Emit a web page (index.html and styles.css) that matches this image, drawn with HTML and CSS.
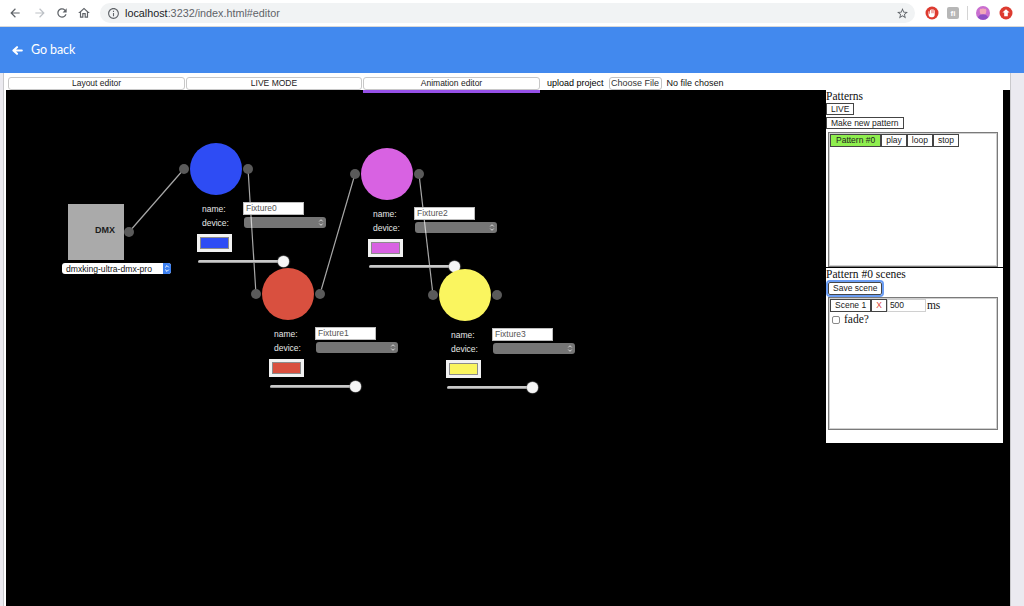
FILE: index.html
```html
<!DOCTYPE html>
<html>
<head>
<meta charset="utf-8">
<title>Animation editor</title>
<link rel="stylesheet" href="styles.css">
</head>
<body>
<div class="chrome">
  <span class="nav-btn nav-back"><svg viewBox="0 0 24 24"><path fill="#5f6368" d="M20 11H7.83l5.59-5.59L12 4l-8 8 8 8 1.41-1.41L7.83 13H20v-2z"/></svg></span>
  <span class="nav-btn nav-fwd"><svg viewBox="0 0 24 24"><path fill="#bdc1c6" d="M4 11h12.17l-5.59-5.59L12 4l8 8-8 8-1.41-1.41L16.17 13H4v-2z"/></svg></span>
  <span class="nav-btn"><svg viewBox="0 0 24 24"><path fill="#5f6368" d="M17.65 6.35A7.958 7.958 0 0 0 12 4c-4.42 0-7.99 3.58-7.99 8s3.57 8 7.99 8c3.73 0 6.84-2.550 7.730-6h-2.08A5.99 5.99 0 0 1 12 18c-3.31 0-6-2.69-6-6s2.69-6 6-6c1.66 0 3.14.69 4.220 1.78L13 11h7V4l-2.35 2.35z"/></svg></span>
  <span class="nav-btn"><svg viewBox="0 0 24 24"><path fill="#5f6368" d="M12 5.69l5 4.5V18h-2v-6H9v6H7v-7.81l5-4.5M12 3L2 12h3v8h6v-6h2v6h6v-8h3L12 3z"/></svg></span>
  <div class="omnibox">
    <svg class="info" viewBox="0 0 24 24"><path fill="#5f6368" d="M11 7h2v2h-2zm0 4h2v6h-2zm1-9C6.48 2 2 6.48 2 12s4.48 10 10 10 10-4.48 10-10S17.52 2 12 2zm0 18c-4.41 0-8-3.59-8-8s3.59-8 8-8 8 3.59 8 8-3.59 8-8 8z"/></svg>
    <span class="url"><b>localhost</b>:3232/index.html#editor</span>
    <svg class="star" viewBox="0 0 24 24"><path fill="#5f6368" d="M22 9.24l-7.19-.62L12 2 9.19 8.63 2 9.24l5.46 4.73L5.820 21 12 17.27 18.18 21l-1.63-7.03L22 9.24zM12 15.4l-3.76 2.27 1-4.28-3.32-2.88 4.38-.38L12 6.1l1.71 4.04 4.38.38-3.32 2.88 1 4.28L12 15.4z"/></svg>
  </div>
  <span class="ext ext-red"><svg viewBox="0 0 14 14"><circle cx="7" cy="7" r="6.5" fill="#dd3b30"/><path fill="#fff" d="M5 4.2v3.6h-.6V5.6c0-.5-.9-.5-.9 0v3c0 1.6 1.1 2.6 2.6 2.6h1.3c1.4 0 2.3-1 2.3-2.4V4.6c0-.5-.8-.5-.8 0v2.6h-.4V3.7c0-.5-.8-.5-.8 0v3.5h-.4V3.4c0-.5-.8-.5-.8 0v3.8h-.4V4.2c0-.5-.8-.5-.8 0z"/></svg></span>
  <span class="ext ext-gray">fi</span>
  <span class="ext-sep"></span>
  <span class="ext ext-avatar"><svg viewBox="0 0 14 14"><circle cx="7" cy="7" r="7" fill="#c96fd0"/><circle cx="7" cy="5.6" r="3.2" fill="#f2a7b9"/><path d="M1.8 11.5c1.2-2.4 3-3.2 5.2-3.2s4 .8 5.2 3.2A7 7 0 0 1 1.8 11.5z" fill="#8e4fc4"/><path d="M3.2 4.6l1.6-2 .6 1.8zM10.8 4.6l-1.6-2-.6 1.8z" fill="#f2a7b9"/></svg></span>
  <span class="ext ext-red2"><svg viewBox="0 0 14 14"><circle cx="7" cy="7" r="6.5" fill="#dd3b30"/><path fill="#fff" d="M7 3.2l3.6 3.4H8.8v3.6H5.2V6.6H3.4z"/></svg></span>
</div>

<header class="appbar">
  <svg class="back-arrow" viewBox="0 0 11 9"><path d="M5 1.2L1.4 4.5 5 7.8M1.6 4.5H9.8" fill="none" stroke="#fff" stroke-width="2.1" stroke-linecap="round" stroke-linejoin="round"/></svg>
  <span class="back-text">Go back</span>
</header>

<main class="main">
  <div class="tabs">
    <button class="tab tab-wide">Layout editor</button>
    <button class="tab">LIVE MODE</button>
    <button class="tab tab-wide active">Animation editor</button>
    <span class="upload-label">upload project</span>
    <span class="file-btn">Choose File</span>
    <span class="file-name">No file chosen</span>
  </div>

  <div class="workspace">
    <div class="canvas">
      <svg class="wires" viewBox="0 0 820 516" width="820" height="516">
        <line x1="123" y1="142" x2="178" y2="79"/>
        <line x1="242" y1="79" x2="250" y2="204"/>
        <line x1="314" y1="204" x2="349" y2="84"/>
        <line x1="413" y1="84" x2="427" y2="205"/>
      </svg>

      <div class="dmx" style="left:56px;top:114px">
        <div class="dmx-row">
          <div class="dmx-box">DMX</div>
          <span class="port"></span>
        </div>
        <div class="dmx-select">
          <span>dmxking-ultra-dmx-pro</span>
          <span class="dmx-arrows"><svg viewBox="0 0 6 9"><path d="M1.2 3.4L3 1.6l1.8 1.8M1.2 5.6L3 7.4l1.8-1.8" fill="none" stroke="#fff" stroke-width="1"/></svg></span>
        </div>
      </div>

      <div class="fixture" style="left:173px;top:53px">
        <div class="fx-head"><span class="port"></span><span class="bulb" style="background:#2e4cf4"></span><span class="port"></span></div>
        <div class="fx-form">
          <span class="fx-label">name:</span><span class="fx-input">Fixture0</span>
          <span class="fx-label">device:</span><span class="fx-select"><svg viewBox="0 0 6 9"><path d="M1.3 3.4L3 1.7l1.7 1.7M1.3 5.6L3 7.3l1.7-1.7" fill="none" stroke="#e4e4e4" stroke-width="0.9"/></svg></span>
        </div>
        <div class="swatch"><span class="swatch-fill" style="background:#2e4cf4"></span></div>
        <input class="dimmer" type="range" min="0" max="100" value="100">
      </div>

      <div class="fixture" style="left:245px;top:178px">
        <div class="fx-head"><span class="port"></span><span class="bulb" style="background:#d9503f"></span><span class="port"></span></div>
        <div class="fx-form">
          <span class="fx-label">name:</span><span class="fx-input">Fixture1</span>
          <span class="fx-label">device:</span><span class="fx-select"><svg viewBox="0 0 6 9"><path d="M1.3 3.4L3 1.7l1.7 1.7M1.3 5.6L3 7.3l1.7-1.7" fill="none" stroke="#e4e4e4" stroke-width="0.9"/></svg></span>
        </div>
        <div class="swatch"><span class="swatch-fill" style="background:#d9503f"></span></div>
        <input class="dimmer" type="range" min="0" max="100" value="100">
      </div>

      <div class="fixture" style="left:344px;top:58px">
        <div class="fx-head"><span class="port"></span><span class="bulb" style="background:#d862e2"></span><span class="port"></span></div>
        <div class="fx-form">
          <span class="fx-label">name:</span><span class="fx-input">Fixture2</span>
          <span class="fx-label">device:</span><span class="fx-select"><svg viewBox="0 0 6 9"><path d="M1.3 3.4L3 1.7l1.7 1.7M1.3 5.6L3 7.3l1.7-1.7" fill="none" stroke="#e4e4e4" stroke-width="0.9"/></svg></span>
        </div>
        <div class="swatch"><span class="swatch-fill" style="background:#d862e2"></span></div>
        <input class="dimmer" type="range" min="0" max="100" value="100">
      </div>

      <div class="fixture" style="left:422px;top:179px">
        <div class="fx-head"><span class="port"></span><span class="bulb" style="background:#faf55f"></span><span class="port"></span></div>
        <div class="fx-form">
          <span class="fx-label">name:</span><span class="fx-input">Fixture3</span>
          <span class="fx-label">device:</span><span class="fx-select"><svg viewBox="0 0 6 9"><path d="M1.3 3.4L3 1.7l1.7 1.7M1.3 5.6L3 7.3l1.7-1.7" fill="none" stroke="#e4e4e4" stroke-width="0.9"/></svg></span>
        </div>
        <div class="swatch"><span class="swatch-fill" style="background:#faf55f"></span></div>
        <input class="dimmer" type="range" min="0" max="100" value="100">
      </div>
    </div>

    <aside class="sidebar">
      <section class="panel panel-patterns">
        <div class="panel-title">Patterns</div>
        <button class="btn">LIVE</button>
        <button class="btn btn-new">Make new pattern</button>
        <div class="list-box">
          <div class="pattern-row">
            <button class="btn btn-pattern">Pattern #0</button>
            <button class="btn">play</button>
            <button class="btn">loop</button>
            <button class="btn">stop</button>
          </div>
        </div>
      </section>
      <section class="panel panel-scenes">
        <div class="panel-title">Pattern #0 scenes</div>
        <button class="btn btn-save">Save scene</button>
        <div class="list-box scene-box">
          <div class="scene-row">
            <button class="btn">Scene 1</button>
            <button class="btn btn-x">X</button>
            <span class="ms-input">500</span>
            <span class="serif-text">ms</span>
          </div>
          <label class="fade-row"><span class="checkbox"></span><span class="serif-text">fade?</span></label>
        </div>
      </section>
    </aside>
  </div>
</main>
</body>
</html>
```
FILE: styles.css
```css
* { box-sizing: border-box; margin: 0; padding: 0; }
html, body { width: 1024px; height: 606px; overflow: hidden; }
body { background: #ebeaf0; font-family: "Liberation Sans", Arial, sans-serif; color: #222; }
button { font-family: inherit; cursor: default; }

/* browser chrome */
.chrome { height: 27px; background: #fff; border-bottom: 1px solid #d8d8d8; display: flex; align-items: center; }
.nav-btn { width: 22px; height: 22px; display: flex; align-items: center; justify-content: center; }
.nav-btn svg { width: 14px; height: 14px; }
.nav-back { margin-left: 4px; }
.nav-fwd { margin-left: 3px; }
.omnibox { margin-left: 5px; width: 815px; height: 20px; border-radius: 10px; background: #f1f3f4; display: flex; align-items: center; padding: 0 6px 0 7px; }
.omnibox .info { width: 13px; height: 13px; }
.url { margin-left: 5px; font-size: 10.8px; color: #5f6368; white-space: nowrap; }
.url b { font-weight: normal; color: #202124; }
.star { margin-left: auto; width: 13px; height: 13px; }
.ext { width: 14px; height: 14px; display: flex; align-items: center; justify-content: center; }
.ext svg { width: 14px; height: 14px; display: block; }
.ext-red { margin-left: 10px; }
.ext-gray { margin-left: 8px; width: 12px; height: 12px; border-radius: 2px; background: #b7b7b7; color: #fff; font-size: 8px; font-weight: bold; }
.ext-sep { margin-left: 8px; width: 1px; height: 14px; background: #d4d4d4; }
.ext-avatar { margin-left: 8px; }
.ext-red2 { margin-left: 9px; }

/* app bar */
.appbar { height: 46px; background: #4289ee; display: flex; align-items: center; padding-left: 12px; }
.back-arrow { width: 11px; height: 9px; }
.back-text { margin-left: 8px; color: #fff; font-family: Lato, "Open Sans", sans-serif; font-size: 12.5px; letter-spacing: -0.1px; line-height: 1; }

/* main */
.main { margin-left: 3px; width: 1008px; height: 533px; background: #fff; border-left: 1px solid #c9c9cc; border-right: 1px solid #c9c9cc; }
.tabs { position: relative; z-index: 2; height: 17px; display: flex; align-items: flex-start; padding: 4px 0 0 4px; gap: 1px; }
.tab { width: 176px; height: 13px; background: #fff; border: 1px solid #c8c8c8; border-radius: 3px; font-size: 8.5px; color: #222; line-height: 11px; text-align: center; position: relative; }
.tab-wide { width: 177px; }
.tab.active::after { content: ""; position: absolute; left: -1px; right: -1px; bottom: -4px; height: 3px; background: #9650e8; }
.upload-label { margin-left: 6px; font-size: 9px; color: #000; line-height: 13px; }
.file-btn { margin-left: 4px; height: 13px; width: 53px; border: 1px solid #c3c3c3; border-radius: 3px; font-size: 9px; line-height: 11px; text-align: center; color: #333; }
.file-name { margin-left: 4px; font-size: 9px; line-height: 13px; color: #111; }

.workspace { margin-left: 2px; height: 516px; background: #000; display: flex; padding-right: 7px; }
.canvas { flex: 1; position: relative; overflow: hidden; }
.wires { position: absolute; left: 0; top: 0; }
.wires line { stroke: #a8a8a8; stroke-width: 1.2; }

.port { width: 10px; height: 10px; border-radius: 50%; background: #5a5a5a; flex: none; }

/* DMX node */
.dmx { position: absolute; }
.dmx-row { display: flex; align-items: center; margin-left: 6px; }
.dmx-box { width: 56px; height: 56px; background: #aaa; display: flex; align-items: center; justify-content: flex-end; padding: 0 9px 5px 0; font-size: 9px; font-weight: bold; color: #1c1c1c; }
.dmx-select { margin-top: 3px; width: 109px; height: 11px; background: #fff; border-radius: 3px; display: flex; align-items: center; padding-left: 4px; font-size: 8.6px; color: #111; }
.dmx-arrows { margin-left: auto; width: 8px; height: 11px; background: #3b7ff0; border-radius: 0 3px 3px 0; display: flex; align-items: center; justify-content: center; }
.dmx-arrows svg { width: 6px; height: 9px; }

/* fixture node */
.fixture { position: absolute; width: 150px; }
.fx-head { display: flex; align-items: center; height: 52px; }
.bulb { width: 52px; height: 52px; border-radius: 50%; margin: 0 1px; flex: none; }
.fx-form { margin: 7px 0 0 23px; display: grid; grid-template-columns: 41px auto; row-gap: 2px; justify-items: start; align-items: center; }
.fx-label { font-size: 8.5px; color: #e8e8e8; }
.fx-input { width: 61px; height: 13px; background: #fff; border: 1px solid #bdbdbd; font-size: 8.5px; line-height: 11px; color: #555; padding-left: 2px; }
.fx-select { width: 82px; height: 11px; margin-left: 1px; border-radius: 3px; background: rgba(255, 255, 255, 0.46); display: flex; align-items: center; justify-content: flex-end; padding-right: 2px; }
.fx-select svg { width: 6px; height: 9px; }
.swatch { margin: 6px 0 0 18px; width: 35px; height: 18px; background: #f2f2f2; padding: 3px; }
.swatch-fill { display: block; width: 100%; height: 100%; border: 1px solid #8c8c8c; }
.dimmer { display: block; margin: 4px 0 0 19px; width: 91px; height: 11px; -webkit-appearance: none; appearance: none; background: transparent; }
.dimmer::-webkit-slider-runnable-track { height: 3px; background: #c9c9c9; border-radius: 2px; border-bottom: 1px solid #999; }
.dimmer::-webkit-slider-thumb { -webkit-appearance: none; width: 11px; height: 11px; border-radius: 50%; background: #f6f6f6; margin-top: -4px; box-shadow: 0 0 1px 0.5px #9a9a9a; }

/* sidebar */
.sidebar { width: 177px; flex: none; align-self: flex-start; display: flex; flex-direction: column; gap: 1px; }
.panel { background: #fff; display: flex; flex-direction: column; align-items: flex-start; }
.panel-patterns { height: 177px; }
.panel-scenes { height: 175px; }
.panel-title { font-family: "Liberation Serif", "Times New Roman", serif; font-size: 11.5px; line-height: 13px; color: #111; }
.btn { height: 12px; padding: 0 4px; border: 1px solid #444; background: #fff; font-size: 8.5px; line-height: 10px; color: #222; white-space: nowrap; }
.btn-new { margin-top: 2px; }
.list-box { margin: 3px 0 0 2px; width: 170px; height: 135px; border: 1px solid #7a7a7a; box-shadow: inset 0 0 0 1px #cfcfcf; padding: 1px 0 0 1px; }
.pattern-row { display: flex; }
.btn-pattern { background: #8fee4f; padding: 0 5px; }
.pattern-row .btn { height: 13px; line-height: 11px; }

.btn-save { margin: 1px 0 0 2px; height: 13px; line-height: 11px; outline: 2px solid #6b9df3; outline-offset: 0; border-radius: 2px; }
.scene-box { margin-top: 2px; height: 133px; }
.scene-row { display: flex; align-items: center; }
.scene-row .btn { height: 13px; line-height: 11px; }
.btn-x { color: #e0463a; padding: 0 4px; }
.ms-input { width: 39px; height: 13px; border: 1px solid #d0d0d0; font-size: 8.5px; line-height: 11px; padding-left: 2px; color: #222; }
.serif-text { font-family: "Liberation Serif", "Times New Roman", serif; font-size: 11.5px; line-height: 13px; color: #111; margin-left: 1px; }
.fade-row { display: flex; align-items: center; margin: 1px 0 0 2px; }
.checkbox { width: 8px; height: 8px; border: 1px solid #8a8a8a; border-radius: 2px; background: #fff; margin-right: 3px; }
```
